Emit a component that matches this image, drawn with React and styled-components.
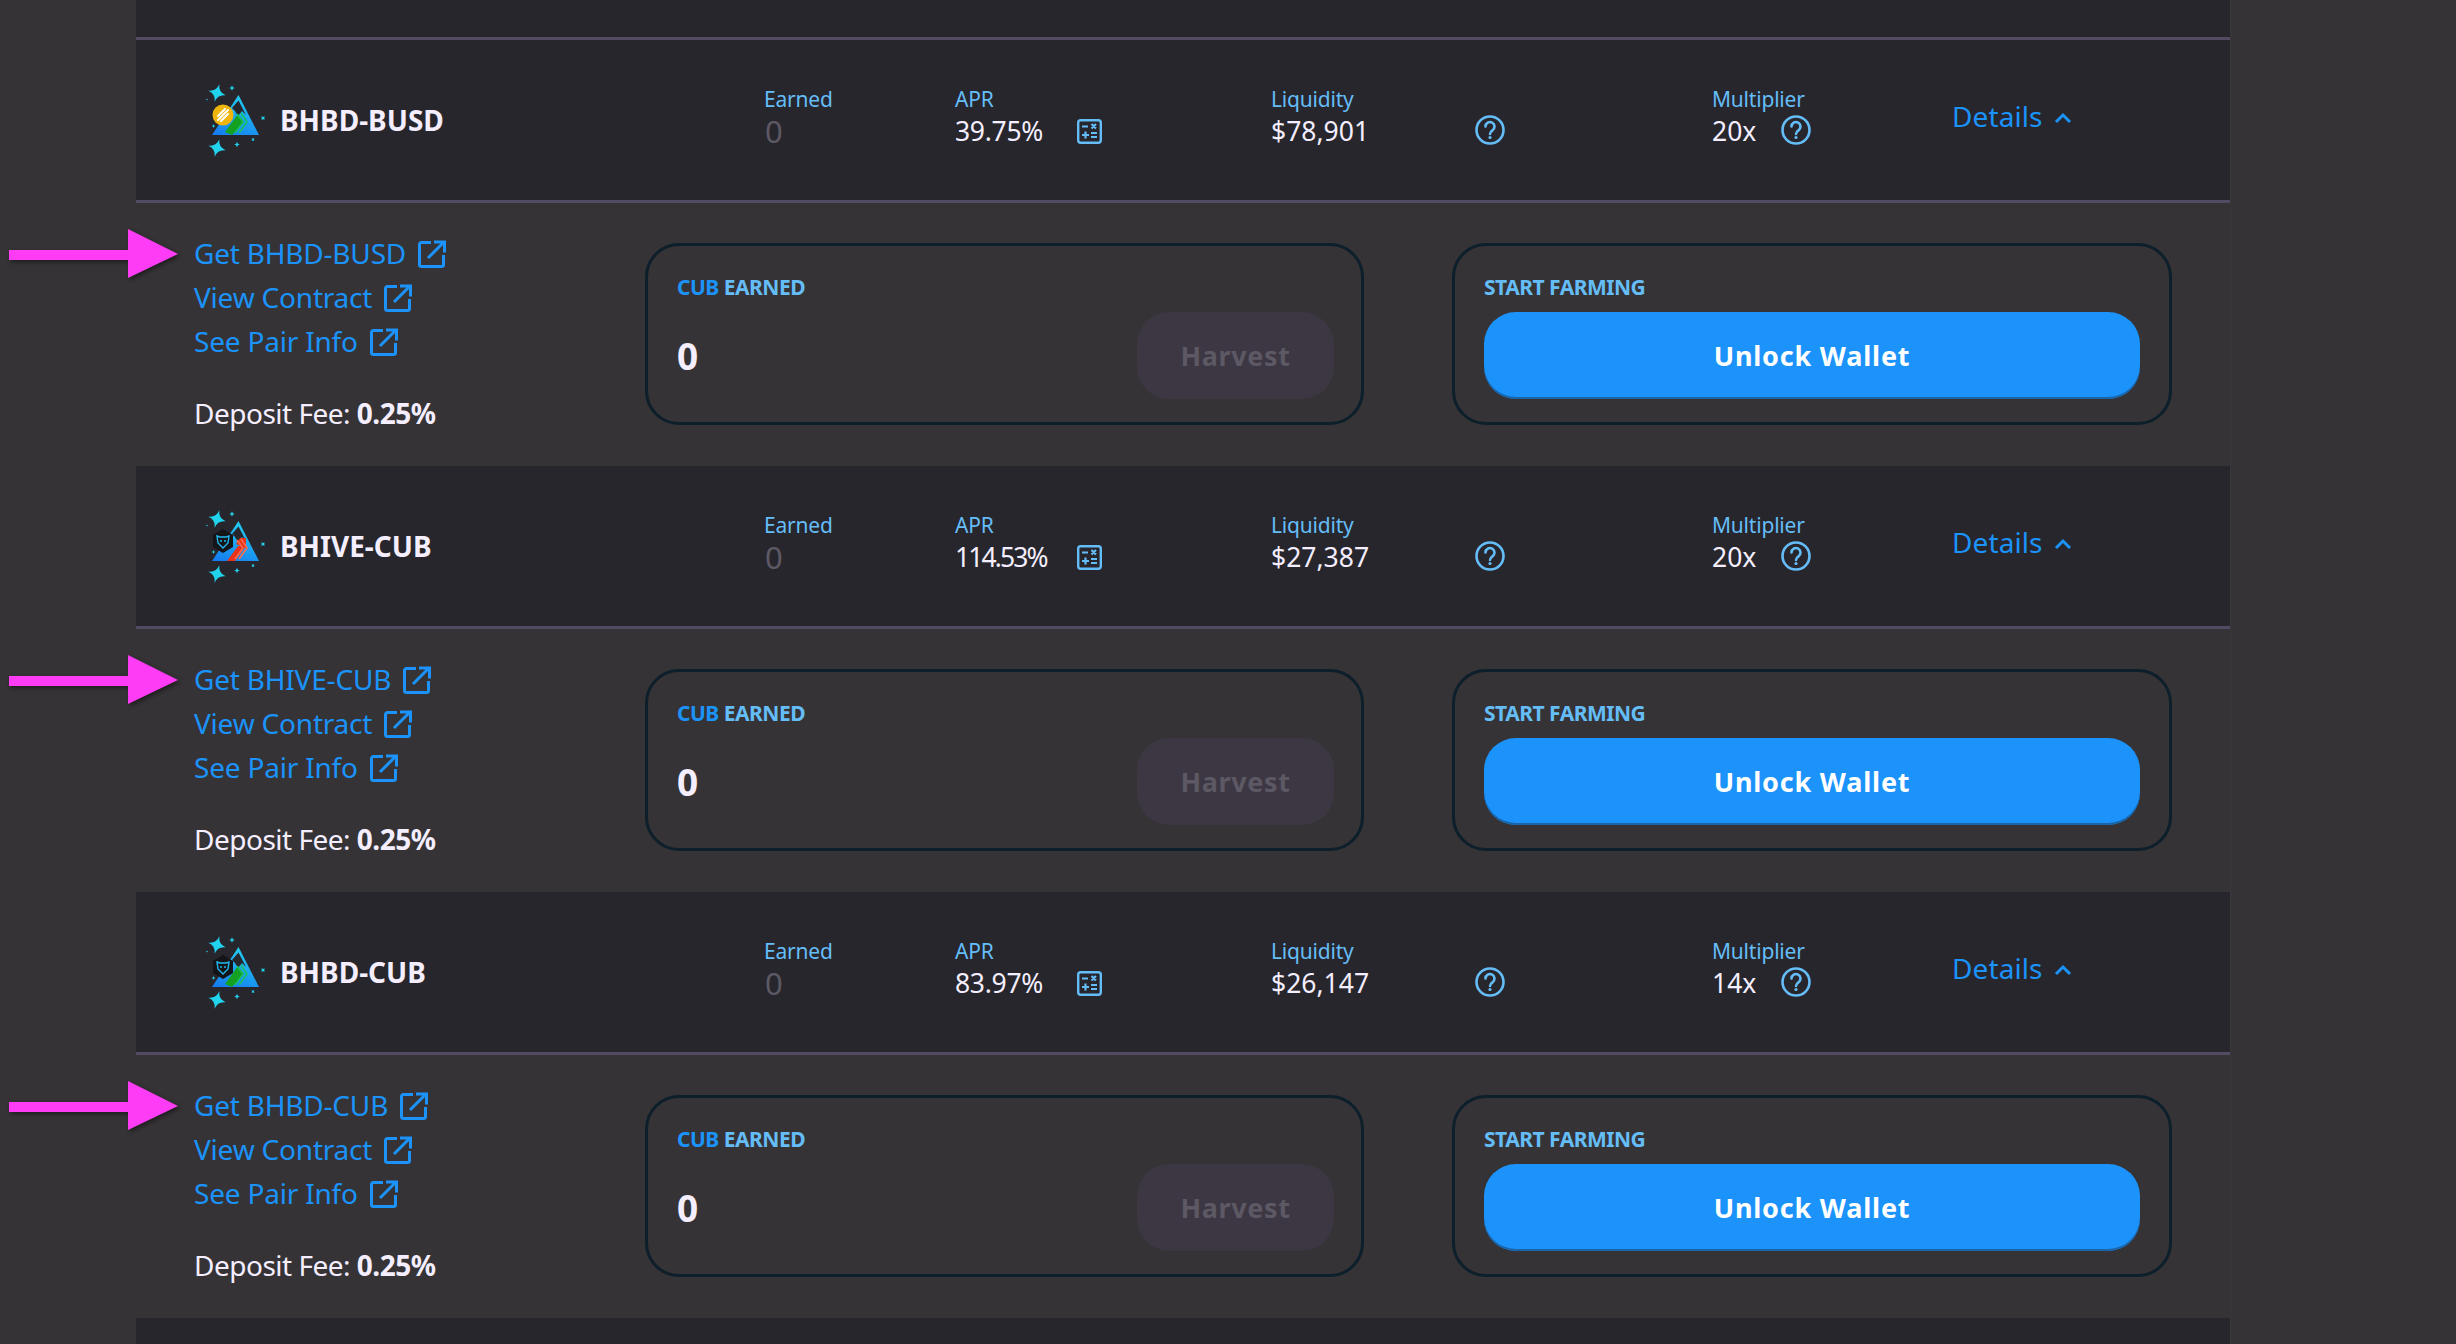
import React from "react";
import styled, { createGlobalStyle } from "styled-components";

const Global = createGlobalStyle`
  html, body { margin: 0; padding: 0; background: #353335; height: 1344px; overflow: hidden; }
  * { box-sizing: border-box; }
  body { font-family: "Noto Sans", "Open Sans", sans-serif; }
`;

const Page = styled.div`
  width: 2456px;
  height: 1344px;
  padding-left: 136px;
  overflow: hidden;
`;
const Panel = styled.div`
  width: 2094px;
  background: #27262c;
  box-shadow: 1px 0 0 #3a383b;
`;
const TopStrip = styled.div`
  height: 40px;
  border-bottom: 3px solid #524b63;
`;
const Row = styled.div`
  height: 163px;
  border-bottom: 3px solid #524b63;
  display: grid;
  grid-template-columns: 44px 584px 191px 316px 441px 240px 1fr;
  align-items: start;
`;
const Token = styled.div`
  grid-column: 2;
  display: flex;
  align-items: center;
  padding-top: 20px;
`;
const LogoBox = styled.svg`
  width: 100px;
  height: 110px;
  flex: none;
`;
const TokenName = styled.div`
  color: #f4eeff;
  font-size: 28px;
  font-weight: 700;
  line-height: 36px;
  margin-top: 10px;
`;
const Cell = styled.div`
  padding-top: 45px;
  display: flex;
  flex-direction: column;
`;
const Label = styled.div`
  color: #65bdf7;
  font-size: 21px;
  line-height: 28px;
  letter-spacing: -0.2px;
`;
const Value = styled.div`
  display: flex;
  align-items: center;
  height: 38px;
  margin-top: -1px;
  padding-left: ${(p) => (p.$muted ? 1 : 0)}px;
  color: ${(p) => (p.$muted ? "#5c5864" : "#f4eeff")};
  font-size: ${(p) => (p.$muted ? 31 : 26.5)}px;
  letter-spacing: -0.2px;
  svg { flex: none; }
`;
const ValueText = styled.span`
  width: ${(p) => p.$w}px;
  flex: none;
  letter-spacing: ${(p) => p.$track}px;
`;
const DetailsToggle = styled.div`
  padding-top: 58px;
  display: flex;
  align-items: center;
  gap: 11px;
  color: #1b93fb;
  font-size: 28px;
  line-height: 36px;
  letter-spacing: 0.1px;
`;
const Detail = styled.div`
  position: relative;
  height: 263px;
  background: #353335;
  display: grid;
  grid-template-columns: 451px 719px 808px;
  padding: 40px 0 0 58px;
`;
const LinksCol = styled.div`
  display: flex;
  flex-direction: column;
`;
const ExtLink = styled.a`
  display: flex;
  align-items: center;
  gap: 12px;
  height: 44px;
  color: #1b93fb;
  font-size: 28px;
  letter-spacing: -0.2px;
  &:first-child { margin-top: -12px; }
  svg { margin-top: 2px; }
`;
const Fee = styled.div`
  color: #f4eeff;
  font-size: 28px;
  line-height: 36px;
  letter-spacing: -0.5px;
  margin-top: 32px;
  b { font-weight: 700; }
`;
const Card = styled.div`
  height: 182px;
  border: 3px solid #0d1f2b;
  border-radius: 34px;
  padding: 27px 27px 0 29px;
`;
const CardWide = styled(Card)`
  margin-left: 88px;
  width: 720px;
  padding-right: 29px;
`;
const CardLabel = styled.div`
  color: #65bdf7;
  font-size: 21px;
  font-weight: 700;
  line-height: 28px;
  letter-spacing: -0.5px;
  text-transform: uppercase;
  span { color: #1b93fb; }
`;
const HarvestRow = styled.div`
  display: flex;
  align-items: center;
  justify-content: space-between;
  margin-top: 11px;
`;
const Zero = styled.div`
  color: #f4eeff;
  font-size: 37px;
  font-weight: 700;
`;
const HarvestButton = styled.div`
  width: 197px;
  height: 87px;
  border-radius: 32px;
  background: #3c3742;
  color: #5c5864;
  font-size: 27px;
  font-weight: 700;
  letter-spacing: 0.6px;
  display: flex;
  align-items: center;
  justify-content: center;
`;
const UnlockButton = styled.div`
  height: 87px;
  margin-top: 11px;
  border-radius: 32px;
  background: #1b93fb;
  box-shadow: inset 0 -2px 0 #1a64a8;
  color: #fff;
  font-size: 27px;
  font-weight: 700;
  letter-spacing: 0.8px;
  display: flex;
  align-items: center;
  justify-content: center;
`;
const ArrowMark = styled.svg`
  position: absolute;
  left: -136px;
  top: 27px;
  width: 190px;
  height: 50px;
  overflow: visible;
`;

const Sparkle = ({ x, y, r, a = 15 }) => (
  <path
    transform={`translate(${x} ${y}) rotate(${a}) scale(${r})`}
    d="M0-1Q.12-.12 1 0Q.12.12 0 1Q-.12.12-1 0Q-.12-.12 0-1Z"
    fill="#22d3ee"
  />
);

const Logo = ({ kind, id }) => (
  <LogoBox viewBox="0 0 100 110">
    <defs>
      <linearGradient id={id} x1="0" y1="1" x2="0.4" y2="0">
        <stop offset="0" stopColor="#1478f0" />
        <stop offset="1" stopColor="#22c8f0" />
      </linearGradient>
    </defs>
    <Sparkle x={37} y={33} r={9} />
    <Sparkle x={37} y={88} r={9} />
    <Sparkle x={52} y={28} r={2.8} a={0} />
    <Sparkle x={57} y={84.5} r={2.8} a={0} />
    <Sparkle x={83} y={58} r={2.6} a={45} />
    <Sparkle x={73} y={79.5} r={2} a={45} />
    <Sparkle x={33.5} y={66} r={2} a={0} />
    <Sparkle x={27} y={39.5} r={1.2} a={45} />
    <path d="M58.5 35L79 75H32Z" fill={`url(#${id})`} />
    <path d="M58.5 40.5L66 55L62 51L58 56L55 51L52 48Z" fill="#27262c" />
    {kind === "red" ? (
      <path d="M47 75L58 60H66L55 75Z M56 58L60 52H66V62Z" fill="#e9321a" />
    ) : (
      <path d="M45 72L58 54L64 62L52 75Z" fill="#14a020" />
    )}
    <path
      d="M57 54L63 62L55 73M61 53L67 62L59 73"
      fill="none"
      stroke={kind === "red" ? "#ff6a50" : "#16c060"}
      strokeWidth="1.6"
    />
    {kind === "coin" ? (
      <g>
        <circle cx="43" cy="55" r="10.5" fill="#efb50d" />
        <path
          d="M38 56L45 49M38 60L48 50M41 61L48 54"
          stroke="#fff"
          strokeWidth="2"
          strokeLinecap="round"
        />
      </g>
    ) : (
      <g>
        <path d="M43 43L53 49V61L43 67L33 61V49Z" fill="#141518" />
        <path
          d="M37 50L40 51H46L49 50L48 57L43 62L38 57Z"
          fill="none"
          stroke="#22b8ee"
          strokeWidth="1.4"
        />
        <circle cx="41" cy="55" r="1" fill="#22b8ee" />
        <circle cx="45" cy="55" r="1" fill="#22b8ee" />
      </g>
    )}
  </LogoBox>
);

const ExtIcon = () => (
  <svg width="28" height="28" viewBox="0 0 28 28" fill="none" stroke="#1b93fb" strokeWidth="3">
    <path d="M13 2.5H3.5a2 2 0 0 0-2 2v20a2 2 0 0 0 2 2h20a2 2 0 0 0 2-2V15" />
    <path d="M10 18L25 3M16 2h10.500v10.500" strokeLinejoin="miter" />
  </svg>
);

const CalcIcon = () => (
  <svg width="25" height="25" viewBox="0 0 25 25">
    <rect x="1.200" y="1.200" width="22.600" height="22.600" rx="2.500" fill="none" stroke="#65bdf7" strokeWidth="2.400" />
    <path
      d="M5 7.500H11M14.500 5L19 9.500M19 5L14.500 9.500M5 16H12M8.500 12.500V19.500M14 14H20M14 18H20"
      stroke="#65bdf7"
      strokeWidth="2.200"
      fill="none"
    />
  </svg>
);

const HelpIcon = () => (
  <svg width="30" height="30" viewBox="0 0 30 30" fill="none" style={{ marginTop: -3 }}>
    <circle cx="15" cy="15" r="13.500" stroke="#65bdf7" strokeWidth="2.600" />
    <path
      d="M10.500 11.500a4.500 4.500 0 1 1 7 3.800c-1.500 1-2.500 1.700-2.500 3.700"
      stroke="#65bdf7"
      strokeWidth="2.600"
      strokeLinecap="round"
    />
    <circle cx="15" cy="22.500" r="1.600" fill="#65bdf7" />
  </svg>
);

const Chevron = () => (
  <svg width="18" height="12" viewBox="0 0 18 12" fill="none" style={{ marginTop: 4 }}>
    <path d="M2 10L9 3L16 10" stroke="#1b93fb" strokeWidth="3" />
  </svg>
);

const Arrow = () => (
  <ArrowMark viewBox="0 0 190 50">
    <path d="M9 20H128V-1L178 24L128 48V30H9Z" fill="#ff3cf5" style={{ filter: "drop-shadow(2px 2px 2px rgba(0,0,0,.45))" }} />
  </ArrowMark>
);

const farms = [
  { name: "BHBD-BUSD", apr: "39.75%", aprTrack: -0.3, liq: "$78,901", mult: "20x", kind: "coin" },
  { name: "BHIVE-CUB", apr: "114.53%", aprTrack: -1.9, liq: "$27,387", mult: "20x", kind: "red" },
  { name: "BHBD-CUB", apr: "83.97%", aprTrack: -0.3, liq: "$26,147", mult: "14x", kind: "green" },
];

const Farm = ({ f, i }) => (
  <>
    <Row>
      <Token>
        <Logo kind={f.kind} id={`g${i}`} />
        <TokenName>{f.name}</TokenName>
      </Token>
      <Cell>
        <Label>Earned</Label>
        <Value $muted>0</Value>
      </Cell>
      <Cell>
        <Label>APR</Label>
        <Value>
          <ValueText $w={122} $track={f.aprTrack}>{f.apr}</ValueText>
          <CalcIcon />
        </Value>
      </Cell>
      <Cell>
        <Label>Liquidity</Label>
        <Value>
          <ValueText $w={204} $track={0}>{f.liq}</ValueText>
          <HelpIcon />
        </Value>
      </Cell>
      <Cell>
        <Label>Multiplier</Label>
        <Value>
          <ValueText $w={69} $track={0}>{f.mult}</ValueText>
          <HelpIcon />
        </Value>
      </Cell>
      <DetailsToggle>
        Details <Chevron />
      </DetailsToggle>
    </Row>
    <Detail>
      <Arrow />
      <LinksCol>
        <ExtLink>Get {f.name} <ExtIcon /></ExtLink>
        <ExtLink>View Contract <ExtIcon /></ExtLink>
        <ExtLink>See Pair Info <ExtIcon /></ExtLink>
        <Fee>Deposit Fee: <b>0.25%</b></Fee>
      </LinksCol>
      <Card>
        <CardLabel><span>CUB</span> Earned</CardLabel>
        <HarvestRow>
          <Zero>0</Zero>
          <HarvestButton>Harvest</HarvestButton>
        </HarvestRow>
      </Card>
      <CardWide>
        <CardLabel>Start Farming</CardLabel>
        <UnlockButton>Unlock Wallet</UnlockButton>
      </CardWide>
    </Detail>
  </>
);

export default function App() {
  return (
    <Page>
      <Global />
      <Panel>
        <TopStrip />
        {farms.map((f, i) => (
          <Farm key={f.name} f={f} i={i} />
        ))}
        <Row />
      </Panel>
    </Page>
  );
}
